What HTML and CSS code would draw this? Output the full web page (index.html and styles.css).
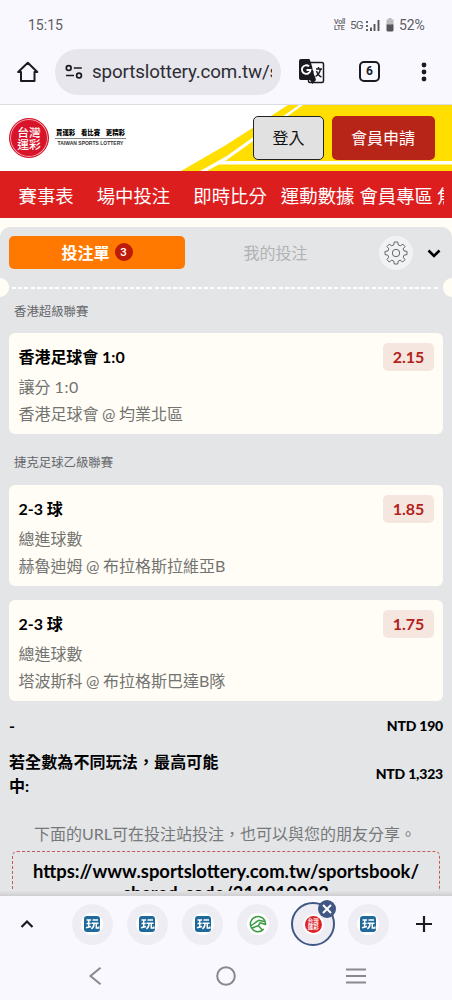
FILE: index.html
```html
<!DOCTYPE html>
<html lang="zh-Hant">
<head>
<meta charset="utf-8">
<title>台灣運彩</title>
<link rel="stylesheet" href="styles.css">
</head>
<body>
<svg class="defs" width="0" height="0">
  <symbol id="wan" viewBox="0 0 18 18">
    <rect x="1" y="1" width="16" height="16" rx="3" fill="#20699b"/>
    <path d="M3.5 5h4.600M5.700 5v7M3.500 8.500h4.200M3 12.800l5-1.200M9.500 5h5.500M8.500 8.200h7M11 8.500c0 2.500-.6 4.200-2.600 5.300M13.300 8.500v4.600h2.500v-1.500" fill="none" stroke="#fff" stroke-width="1.500"/>
  </symbol>
</svg>
<div class="phone">
  <div class="status">
    <span class="clock">15:15</span>
    <span class="signals">
      <span class="volte"><span>Voll</span><span>LTE</span></span>
      <span class="g5">5G</span>
      <svg width="14" height="13" viewBox="0 0 14 13"><path d="M1 2v2M1 6v2M1 10v2" stroke="#555" stroke-width="1.800"/><path d="M5 8.500V12M8.500 5v7M12.500 1v11" stroke="#555" stroke-width="1.900"/></svg>
      <svg class="battery" width="8" height="14" viewBox="0 0 8 14"><path d="M2.500 0h3v1.500H7.500V7h-7V1.500h2z" fill="#bbb"/><path d="M.5 6.500h7V12q0 1.500-1.500 1.500H2Q.5 13.500.5 12z" fill="#555"/></svg>
      <span class="percent">52%</span>
    </span>
  </div>
  <div class="toolbar">
    <svg class="home" width="22" height="22" viewBox="0 0 22 22"><path d="M1.200 11H4v9h13.500v-9h2.800L10.800 1.800z" fill="none" stroke="#1b1b1f" stroke-width="2" stroke-linejoin="round"/></svg>
    <div class="address">
      <svg width="18" height="16" viewBox="0 0 18 16"><g fill="none" stroke="#1b1b1f" stroke-width="1.700"><circle cx="3.700" cy="4" r="2.400"/><path d="M8.800 4h8M1 11.500h8"/><circle cx="14" cy="11.500" r="2.400"/></g></svg>
      <span class="url">sportslottery.com.tw/s</span>
    </div>
    <svg class="translate" width="27" height="27" viewBox="0 0 27 27"><rect x="10.500" y="4.500" width="15" height="20" rx="1.500" fill="#fafaff" stroke="#1b1b1f" stroke-width="1.500"/><path d="M3 1h8.500l1.500 4 5 17H3q-2 0-2-2V3q0-2 2-2zM12 22h6l-3.500 4z" fill="#1b1b1f"/><path d="M11 8.300a4.300 4.300 0 1 0 1.500 3.700H8.500" fill="none" stroke="#fff" stroke-width="1.900"/><path d="M18 11h6M20.500 9v2M22.500 11c-.6 3-2.500 6-5 7.500M18.500 13c1 3 2.500 5 5 6" stroke="#1b1b1f" stroke-width="1.400" fill="none"/><path d="M14.500 11H18M16 14.500l1.200 3" stroke="#fff" stroke-width="1.300"/></svg>
    <span class="tabcount">6</span>
    <svg class="more" width="6" height="20" viewBox="0 0 6 20"><g fill="#1b1b1f"><circle cx="3" cy="3" r="2.400"/><circle cx="3" cy="10" r="2.400"/><circle cx="3" cy="17" r="2.400"/></g></svg>
  </div>
  <header class="brandbar">
    <svg class="art" width="452" height="66" viewBox="0 0 452 66"><path d="M181 66L226 40 288 0H452V66z" fill="#ffde00"/><path d="M200 66L226 51.500 299 0h4L226 55.500 207 66zM214 60l10-4H452v3.500H222z" fill="#fff"/></svg>
    <div class="seal"><span>台灣</span><span>運彩</span></div>
    <div class="slogan"><b><span>買運彩</span><span>看比賽</span><span>更精彩</span></b><small>TAIWAN SPORTS LOTTERY</small></div>
    <button class="btn login">登入</button>
    <button class="btn join">會員申請</button>
  </header>
  <nav class="menu"><a>賽事表</a><a>場中投注</a><a>即時比分</a><a>運動數據</a><a>會員專區</a><a>焦點</a></nav>
  <main class="page">
    <section class="slip">
      <div class="tabs">
        <div class="tab active">投注單<span class="count">3</span></div>
        <div class="tab">我的投注</div>
        <div class="gear"><svg width="24" height="24" viewBox="0 0 24 24" fill="none" stroke="#666" stroke-width="1"><circle cx="12" cy="12" r="3.700"/><path stroke-linejoin="round" d="M10.300 1h3.400l.7 3 2 .8L19 3.200 21 5.500l-1.800 2.300.8 2.200 3 .4v3.200l-3 .6-.8 2 1.800 2.500-2.300 2.300-2.500-1.800-1.900.8-.6 3h-3.400l-.6-3-2-.8L5.200 21 3 18.700l1.700-2.500-.8-2-2.900-.6v-3.200l3-.4.8-2.200L3 5.500l2.200-2.300 2.500 1.600 2-.8z"/></svg></div>
        <svg class="fold" width="14" height="10" viewBox="0 0 14 10"><path d="M1.500 2.500L7 8 12.500 2.500" fill="none" stroke="#000" stroke-width="2.600"/></svg>
      </div>
      <div class="tear"><i></i><span></span><i></i></div>
      <h2 class="league">香港超級聯賽</h2>
      <article class="bet"><div><h3>香港足球會 1:0</h3><p>讓分 <span class="wide">1:0</span></p><p class="match">香港足球會 @ 均業北區</p></div><b class="odds">2.15</b></article>
      <h2 class="league second">捷克足球乙級聯賽</h2>
      <article class="bet"><div><h3>2-3 球</h3><p>總進球數</p><p class="match">赫魯迪姆 @ 布拉格斯拉維亞B</p></div><b class="odds">1.85</b></article>
      <article class="bet next"><div><h3>2-3 球</h3><p>總進球數</p><p class="match">塔波斯科 @ 布拉格斯巴達B隊</p></div><b class="odds">1.75</b></article>
      <div class="total stake"><span>-</span><b>NTD 190</b></div>
      <div class="total payout"><span>若全數為不同玩法，最高可能中:</span><b>NTD 1,323</b></div>
      <p class="hint">下面的URL可在投注站投注，也可以與您的朋友分享。</p>
      <div class="share"><span>https://www.sportslottery.com.tw/sportsbook/</span><span>shared-code/314910933</span></div>
    </section>
    <div class="shade"></div>
  </main>
  <div class="tabstrip">
    <svg class="up" width="14" height="10" viewBox="0 0 14 10"><path d="M1.500 8L7 2.500 12.500 8" fill="none" stroke="#1b1b1f" stroke-width="2.200"/></svg>
    <div class="sites">
      <div class="site"><span><svg width="18" height="18"><use href="#wan"/></svg></span></div>
      <div class="site"><span><svg width="18" height="18"><use href="#wan"/></svg></span></div>
      <div class="site"><span><svg width="18" height="18"><use href="#wan"/></svg></span></div>
      <div class="site"><span><svg width="18" height="18" viewBox="0 0 18 18" fill="none" stroke="#3a9c42" stroke-width="1.500" stroke-linejoin="round"><path d="M14.800 14A7.600 7.600 0 1 1 16.600 9.500L11 7.800 9.200 10.800 13.500 15M1.600 11L9.500 5.300 15.500 6.500M3 13l6.200-2.200"/></svg></span></div>
      <div class="site current"><span class="mini"><em>台灣</em><em>運彩</em></span><svg class="close" width="18" height="18" viewBox="0 0 18 18"><circle cx="9" cy="9" r="9" fill="#405783"/><path d="M5 5l8 8M13 5l-8 8" stroke="#fff" stroke-width="2"/></svg></div>
      <div class="site"><span><svg width="18" height="18"><use href="#wan"/></svg></span></div>
    </div>
    <svg class="plus" width="16" height="16" viewBox="0 0 16 16"><path d="M8 0v16M0 8h16" stroke="#1b1b1f" stroke-width="2.200"/></svg>
  </div>
  <div class="sysnav">
    <svg width="14" height="18" viewBox="0 0 14 18"><path d="M12.500 .8L2.500 9l10 8.200" fill="none" stroke="#88888d" stroke-width="2"/></svg>
    <svg class="circle" width="20" height="20" viewBox="0 0 20 20"><circle cx="10" cy="10" r="8.800" fill="none" stroke="#88888d" stroke-width="2"/></svg>
    <svg width="20" height="16" viewBox="0 0 20 16"><path d="M0 1.500h20M0 8h20M0 14.500h20" stroke="#88888d" stroke-width="2"/></svg>
  </div>
</div>
</body>
</html>
```
FILE: styles.css
```css
* { box-sizing: border-box; }
body, h2, h3, p { margin: 0; }
body { font-family: Lato, "Noto Sans CJK TC", sans-serif; color: #000; }
svg { display: block; flex: none; }
.defs { position: absolute; }
.phone { width: 452px; height: 1000px; overflow: hidden; background: #f9f8ff; display: flex; flex-direction: column; }
.phone > * { flex: none; }

.status { height: 48px; padding: 2px 27px 0 28px; display: flex; align-items: center; justify-content: space-between; font-family: Roboto, sans-serif; font-size: 14px; color: #5d5d62; }
.signals { display: flex; align-items: center; }
.volte { display: flex; flex-direction: column; width: 12px; font-size: 7px; line-height: 6px; font-weight: 500; letter-spacing: -.2px; }
.g5 { font-size: 11.500px; margin: 0 3px 0 4px; width: 13px; letter-spacing: -.6px; }
.battery { margin: 0 5px 0 6px; }
.percent { width: 26px; letter-spacing: -.1px; }

.toolbar { height: 57px; border-bottom: 1px solid #dcdce2; display: flex; align-items: center; padding: 0 25px 9px 17px; }
.address { width: 226px; height: 46px; margin-left: 16px; border-radius: 23px; background: #e7e6ed; display: flex; align-items: center; padding: 0 8px 0 10px; gap: 9px; }
.url { width: 180px; overflow: hidden; white-space: nowrap; font: 18.800px/30px Roboto, sans-serif; letter-spacing: -.14px; color: #2d2d33; }
.translate { margin-left: 17px; }
.tabcount { width: 21px; height: 21px; margin-left: 34px; border: 2px solid #1b1b1f; border-radius: 5px; font: 700 12px/17px Roboto, sans-serif; text-align: center; color: #1b1b1f; }
.more { margin-left: auto; }

.brandbar { position: relative; height: 66px; background: #fff; display: flex; align-items: center; padding: 0 17.500px 0 9px; }
.art { position: absolute; left: 0; top: 0; }
.seal { width: 40px; height: 40px; border-radius: 50%; background: #d8142a; border: 1px solid #d8142a; box-shadow: inset 0 0 0 1px #f3aeb5; display: flex; flex-direction: column; align-items: center; justify-content: center; color: #fff; font: 500 11.800px/12px "Noto Sans CJK TC", sans-serif; }
.slogan { margin-left: 6px; width: 71px; display: flex; flex-direction: column; font-family: "Noto Sans CJK TC", sans-serif; }
.slogan b { display: flex; justify-content: space-between; padding: 0 1px; font-size: 6.400px; line-height: 10px; font-weight: 900; border-bottom: 1px solid #888; white-space: nowrap; }
.slogan small { font: 700 5px/9px "Liberation Sans", sans-serif; text-align: center; white-space: nowrap; color: #333; }
.btn { position: relative; height: 44px; margin: 0; padding: 0 0 2px; border-radius: 5px; font: 16px "Noto Sans CJK TC", sans-serif; }
.login { width: 71px; margin-left: auto; border: 1px solid #222; background: #e1e1e1; color: #111; }
.join { width: 103px; margin-left: 7.500px; border: 0; background: #b72519; color: #fff; }

.menu { height: 47px; background: #dc1e1e; color: #fff; display: flex; align-items: center; padding-left: 18.500px; font: 18.400px/46px "Noto Sans CJK TC", sans-serif; white-space: nowrap; overflow: hidden; }
.menu a { flex: none; }
.menu a:nth-child(2), .menu a:nth-child(3) { margin-left: 23px; }
.menu a:nth-child(4) { margin-left: 14px; }
.menu a:nth-child(5) { margin-left: 5px; }
.menu a:nth-child(6) { margin-left: 4px; width: 7px; overflow: hidden; }

.page { position: relative; height: 678px; background: #fffdf6; padding-top: 9px; overflow: hidden; }
.slip { height: 680px; background: #e3e5e7; border-radius: 10px 10px 0 0; padding-top: 9px; }
.tabs { display: flex; align-items: center; height: 33px; padding: 0 11px 0 9px; }
.tab { width: 176px; height: 33px; border-radius: 5px; display: flex; align-items: center; justify-content: center; padding-bottom: 1px; font: 16px/24px "Noto Sans CJK TC", sans-serif; color: #b1b2b4; }
.tab:nth-child(2) { width: 181px; }
.active { background: #ff7900; color: #fff; font-weight: 700; }
.count { margin-left: 5px; width: 18px; height: 18px; border-radius: 50%; background: #bd1b0b; font: 500 11.500px/18px Roboto, sans-serif; text-align: center; }
.gear { width: 34px; height: 34px; margin-left: 13px; border-radius: 50%; background: #f1f2f4; display: flex; align-items: center; justify-content: center; }
.fold { margin-left: auto; }
.tear { display: flex; align-items: center; height: 19px; margin-top: 9px; }
.tear i { width: 9px; height: 19px; background: #fffdf4; border-radius: 0 10px 10px 0; }
.tear i:last-child { border-radius: 10px 0 0 10px; }
.tear span { flex: 1; height: 2.500px; margin: 1px 3px 0; background: repeating-linear-gradient(90deg, #fff 0 4px, #e3e5e7 4px 6.200px); }
.league { margin-top: 6px; height: 18px; padding-left: 14px; font-size: 12.400px; line-height: 18px; font-weight: 400; color: #66676a; }
.bet { height: 101px; margin: 12px 9px 0; padding: 10px 9px 0 9.500px; border-radius: 6px; background: #fffdf5; display: flex; justify-content: space-between; }
.bet h3 { font-size: 16px; line-height: 28px; font-weight: 700; letter-spacing: -.05px; }
.bet p { font-size: 16px; line-height: 28px; margin-top: 2px; color: #737371; }
.wide { letter-spacing: .6px; }
.bet .match { margin-top: -1px; word-spacing: -.6px; }
.odds { width: 51px; height: 28px; border-radius: 5px; background: #f6e6e0; color: #b3221a; font-size: 16px; line-height: 28px; text-align: center; }
.second { margin-top: 20px; }
.second + .bet { margin-top: 13px; }
.bet.next { margin-top: 14px; }
.total { display: flex; align-items: center; justify-content: space-between; margin: 0 9px; font-weight: 700; font-size: 16px; line-height: 24px; }
.total b { font-size: 14px; letter-spacing: -.2px; }
.stake { height: 24px; margin-top: 13px; }
.payout { height: 48px; margin-top: 12px; }
.payout span { width: 220px; letter-spacing: .12px; }
.hint { margin: 24px 0 0; height: 24px; font-size: 16px; line-height: 24px; padding-left: 34px; white-space: nowrap; color: #77787b; }
.share { margin: 5px 12px 0; height: 70px; border: 1px dashed #c65a5a; border-radius: 5px; padding-top: 8px; display: flex; flex-direction: column; align-items: center; font-size: 18.450px; line-height: 22px; font-weight: 700; }
.shade { position: absolute; left: 0; right: 0; bottom: 0; height: 5px; background: linear-gradient(#e2e2e4, #cfcfd3); }

.tabstrip { height: 56px; display: flex; align-items: center; padding: 0 20px; }
.sites { display: flex; margin-left: 37.500px; gap: 14.300px; }
.site { position: relative; width: 41px; height: 41px; border-radius: 50%; background: #efedf4; display: flex; align-items: center; justify-content: center; }
.site > span { width: 22px; height: 22px; border-radius: 50%; background: #fff; display: flex; align-items: center; justify-content: center; }
.current { width: 44px; height: 44px; margin: -1.500px; border: 2px solid #405783; }
.site .mini { width: 17px; height: 17px; background: #da2329; color: #fff; flex-direction: column; font: 700 5.500px/6px "Noto Sans CJK TC", sans-serif; box-shadow: 0 0 0 2px #fff; }
.mini em { font-style: normal; }
.close { position: absolute; right: -3px; top: -4px; }
.plus { margin-left: auto; }
.sysnav { height: 48px; display: flex; align-items: center; justify-content: space-between; padding: 0 86px 1px 88px; }
.circle { margin-left: 4px; }
```
